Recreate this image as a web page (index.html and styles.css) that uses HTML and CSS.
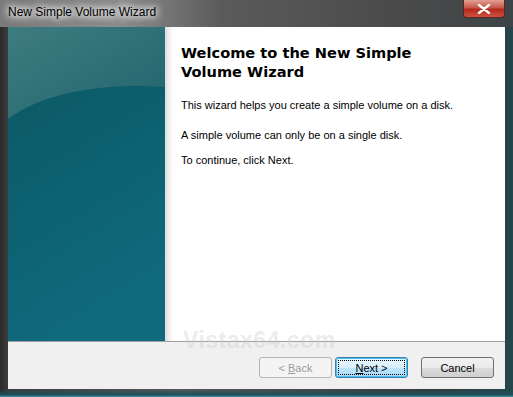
FILE: index.html
```html
<!DOCTYPE html>
<html lang="en">
<head>
    <meta charset="UTF-8">
    <title>New Simple Volume Wizard</title>
    <link rel="stylesheet" href="styles.css">
</head>
<body>
    <div class="window">
        <div class="titlebar">
            <span class="title">New Simple Volume Wizard</span>
            <div class="close">
                <svg width="14" height="10" viewBox="0 0 14 10"><path d="M2 1 L12 9 M12 1 L2 9" stroke="#fff" stroke-width="2.4" stroke-linecap="round"/></svg>
            </div>
        </div>
        <div class="client">
            <div class="main">
                <div class="banner">
                    <svg width="157" height="314" viewBox="0 0 157 314" preserveAspectRatio="none">
                        <defs>
                            <linearGradient id="top" x1="0" y1="0" x2="1" y2="1">
                                <stop offset="0" stop-color="#3d7d80"/>
                                <stop offset="1" stop-color="#22646e"/>
                            </linearGradient>
                            <linearGradient id="low" x1="0" y1="0" x2="0.3" y2="1">
                                <stop offset="0" stop-color="#0b5561"/>
                                <stop offset="1" stop-color="#0f6a7c"/>
                            </linearGradient>
                        </defs>
                        <rect width="157" height="314" fill="url(#low)"/>
                        <path d="M0 0 H157 V60 C105 56 40 62 0 92 Z" fill="url(#top)"/>
                    </svg>
                </div>
                <div class="content">
                    <h1>Welcome to the New Simple Volume Wizard</h1>
                    <p>This wizard helps you create a simple volume on a disk.</p>
                    <p class="tight">A simple volume can only be on a single disk.</p>
                    <p class="tight">To continue, click Next.</p>
                </div>
                <div class="watermark">Vistax64.com</div>
            </div>
            <div class="footer">
                <button class="btn disabled">&lt; <u>B</u>ack</button>
                <button class="btn default"><u>N</u>ext &gt;</button>
                <button class="btn cancel">Cancel</button>
            </div>
        </div>
    </div>
</body>
</html>
```

FILE: styles.css
```css
body {
    margin: 0;
    font-family: "Liberation Sans", Arial, sans-serif;
}
.window {
    width: 513px;
    height: 397px;
    box-sizing: border-box;
    display: flex;
    flex-direction: column;
    padding: 0 8px 8px 8px;
    background:
        linear-gradient(180deg, transparent 0, transparent 389px, #1d4f5c 395px, #4a9aa8 397px),
        linear-gradient(90deg, #2a2a2a 0, #3c3c3c 8px, #5a5a5a 180px, #3a3a3a 420px, #24464c 513px);
}
.titlebar {
    height: 27px;
    margin: 0 -8px;
    padding-left: 8px;
    display: flex;
    align-items: flex-start;
    justify-content: space-between;
    background: linear-gradient(90deg, #7a7a7a 0, #8c8c8c 120px, #5b5b5b 220px, #4a4a4a 400px, #3e4447 513px);
}
.title {
    margin-top: 5px;
    font-family: "Liberation Sans", Arial, sans-serif;
    font-size: 12px;
    color: #000;
    text-shadow: 0 0 6px #fff, 0 0 8px #fff, 0 0 10px #eee;
}
.close {
    width: 42px;
    height: 18px;
    margin-right: 8px;
    box-sizing: border-box;
    border: 1px solid #5a2620;
    border-top: none;
    border-radius: 0 0 4px 4px;
    background: linear-gradient(180deg, #e0a092 0, #c8564a 45%, #b22a1e 55%, #d05040 100%);
    display: flex;
    align-items: center;
    justify-content: center;
}
.client {
    flex: 1;
    display: flex;
    flex-direction: column;
    background: #f0f0f0;
}
.main {
    position: relative;
    height: 314px;
    display: flex;
    border-bottom: 1px solid #a0a0a0;
}
.banner {
    width: 157px;
    flex: none;
}
.banner svg {
    display: block;
}
.content {
    flex: 1;
    background: #fff;
    box-shadow: inset 7px 0 6px -4px #d8d8d8;
    padding: 16px 0 0 16px;
}
h1 {
    margin: 0 0 18px 0;
    width: 250px;
    font-family: "DejaVu Sans", Verdana, sans-serif;
    font-size: 14.6px;
    line-height: 19px;
    font-weight: bold;
    color: #000;
}
p {
    margin: 0 0 17px 0;
    font-size: 11px;
    line-height: 13px;
    color: #000;
}
p.tight {
    margin-bottom: 12px;
}
.watermark {
    position: absolute;
    left: 175px;
    top: 300px;
    font-size: 23px;
    font-weight: bold;
    color: rgba(200, 200, 200, 0.35);
    letter-spacing: 0.5px;
}
.footer {
    flex: 1;
    display: flex;
    align-items: flex-start;
    padding: 15px 11px 0 0;
    justify-content: flex-end;
    gap: 3px;
}
.btn {
    width: 73px;
    height: 21px;
    padding: 0;
    font-family: "Liberation Sans", Arial, sans-serif;
    font-size: 11px;
    color: #000;
    border: 1px solid #707070;
    border-radius: 3px;
    background: linear-gradient(180deg, #f2f2f2 0, #ebebeb 50%, #dddddd 51%, #cfcfcf 100%);
}
.btn.disabled {
    color: #9c9c9c;
    border-color: #b5b5b5;
    background: #f4f4f4;
}
.btn.default {
    border-color: #3c7fb1;
    background: linear-gradient(180deg, #eaf6fd 0, #d9f0fc 50%, #bee6fd 51%, #a7d9f5 100%);
    box-shadow: inset 0 0 0 1px #48c4f0;
    outline: 1px dotted #000;
    outline-offset: -4px;
}
.btn.cancel {
    margin-left: 10px;
}
```
